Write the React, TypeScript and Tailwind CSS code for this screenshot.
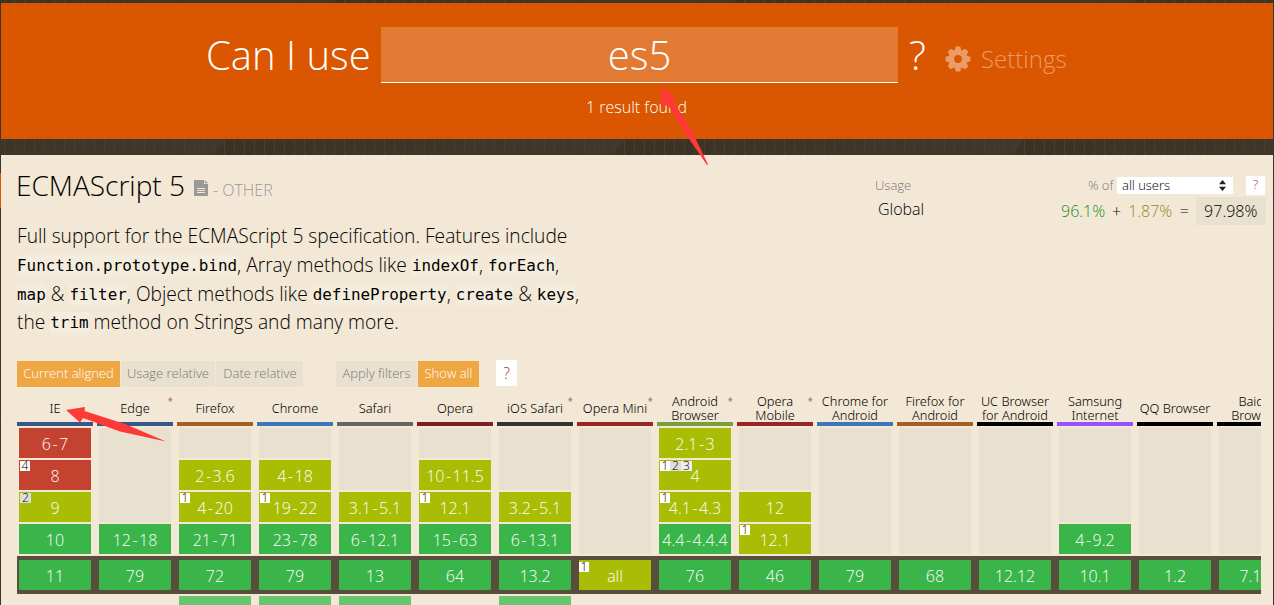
import React from "react";

type Cell = { v: string; s: "y" | "a" | "n"; notes?: string[] };
type Browser = {
  name: string[];
  bar: string;
  star?: boolean;
  past: Cell[];
  now: Cell;
  next?: boolean;
};

const y = (v: string): Cell => ({ v, s: "y" });
const a = (v: string, ...notes: string[]): Cell => ({ v, s: "a", notes });
const n = (v: string, ...notes: string[]): Cell => ({ v, s: "n", notes });

const tone = { y: "bg-[#39b54a]", a: "bg-[#a8bd04]", n: "bg-[#c44230]" };

const browsers: Browser[] = [
  { name: ["IE"], bar: "bg-[#375787]", past: [n("6-7"), n("8", "4"), a("9", "2"), y("10")], now: y("11") },
  { name: ["Edge"], bar: "bg-[#375787]", star: true, past: [y("12-18")], now: y("79") },
  { name: ["Firefox"], bar: "bg-[#a55f24]", past: [a("2-3.6"), a("4-20", "1"), y("21-71")], now: y("72"), next: true },
  { name: ["Chrome"], bar: "bg-[#3e76bb]", past: [a("4-18"), a("19-22", "1"), y("23-78")], now: y("79"), next: true },
  { name: ["Safari"], bar: "bg-[#666666]", past: [a("3.1-5.1"), y("6-12.1")], now: y("13"), next: true },
  { name: ["Opera"], bar: "bg-[#801f22]", past: [a("10-11.5"), a("12.1", "1"), y("15-63")], now: y("64") },
  { name: ["iOS Safari"], bar: "bg-[#333333]", star: true, past: [a("3.2-5.1"), y("6-13.1")], now: y("13.2"), next: true },
  { name: ["Opera Mini"], bar: "bg-[#972428]", star: true, past: [], now: a("all", "1") },
  { name: ["Android", "Browser"], bar: "bg-[#7a9f3c]", star: true, past: [a("2.1-3"), a("4", "1", "2", "3"), a("4.1-4.3", "1"), y("4.4-4.4.4")], now: y("76") },
  { name: ["Opera", "Mobile"], bar: "bg-[#972428]", star: true, past: [a("12"), a("12.1", "1")], now: y("46") },
  { name: ["Chrome for", "Android"], bar: "bg-[#3e76bb]", past: [], now: y("79") },
  { name: ["Firefox for", "Android"], bar: "bg-[#a55f24]", past: [], now: y("68") },
  { name: ["UC Browser", "for Android"], bar: "bg-black", past: [], now: y("12.12") },
  { name: ["Samsung", "Internet"], bar: "bg-[#9751ff]", past: [y("4-9.2")], now: y("10.1") },
  { name: ["QQ Browser"], bar: "bg-black", past: [], now: y("1.2") },
  { name: ["Baidu", "Browser"], bar: "bg-black", past: [], now: y("7.12") },
];

const emptyHeight = ["h-0", "h-[30px]", "h-[62px]", "h-[94px]", "h-[126px]"];
const noteTone: Record<string, string> = {
  "1": "w-[10px] bg-white",
  "2": "w-[11px] bg-[#dddddd]",
  "3": "w-[11px] bg-[#eeeeee]",
  "4": "w-[10px] bg-white",
};

function Version({ cell, current }: { cell: Cell; current?: boolean }) {
  return (
    <div className={`relative h-[30px] w-[72px] shrink-0 whitespace-nowrap pt-px text-center text-[16px] leading-[31px] text-white ${tone[cell.s]}`}>
      {cell.v.split("-").map((part, i) => (
        <React.Fragment key={i}>
          {i > 0 && <span className="mx-[1.5px]">-</span>}
          {part}
        </React.Fragment>
      ))}
      {cell.notes && cell.notes.length > 0 && (
        <span className={`absolute flex ${current ? "left-0 top-[2px]" : "left-px top-px"}`}>
          {cell.notes.map((k) => (
            <span key={k} className={`h-[10px] text-center text-[12px] leading-[9px] text-black ${noteTone[k]}`}>
              {k}
            </span>
          ))}
        </span>
      )}
    </div>
  );
}

function Column({ b }: { b: Browser }) {
  const missing = 4 - b.past.length;
  return (
    <div className="flex w-[80px] shrink-0 flex-col">
      <div className="relative flex h-[28px] w-[76px] flex-col justify-center text-center font-['Noto_Sans'] text-[12.8px] leading-[14px] text-black">
        {b.name.map((l) => (
          <span key={l} className="whitespace-nowrap">{l}</span>
        ))}
        {b.star && <span className="absolute right-0 top-[1px] text-[10px] leading-[12px] text-[#8a3a28]">*</span>}
      </div>
      <div className={`h-1 w-[76px] ${b.bar}`} />
      <div className="flex h-[130px] flex-col gap-[2px] pl-[2px] pt-[2px]">
        {missing > 0 && <div className={`w-[72px] shrink-0 bg-[#e9e1cf] ${emptyHeight[missing]}`} />}
        {b.past.map((c) => (
          <Version key={c.v} cell={c} />
        ))}
      </div>
      <div className="h-[38px] bg-[#594d3b] pl-[2px] pt-1">
        <Version cell={b.now} current />
      </div>
      <div className="pl-[2px] pt-[2px]">{b.next && <div className="h-[30px] w-[72px] bg-[#69c46e]" />}</div>
    </div>
  );
}

function Code({ children }: { children: string }) {
  return (
    <code className="bg-[#f4ecdc] py-[1px] align-[1px] font-['DejaVu_Sans_Mono',monospace] text-[15.9px] leading-[18px] text-black">{children}</code>
  );
}

function Gear() {
  return (
    <svg width="26" height="26" viewBox="-13 -13 26 26" fill="#eb9c66">
      {[0, 45, 90, 135, 180, 225, 270, 315].map((d) => (
        <path key={d} d="M-3.4 -8 L-2.2 -12.4 H2.2 L3.4 -8 Z" transform={`rotate(${d})`} />
      ))}
      <path fillRule="evenodd" d="M0 -9.4A9.4 9.4 0 1 1 0 9.4A9.4 9.4 0 1 1 0 -9.4ZM0 -3.9A3.9 3.9 0 1 0 0 3.9A3.9 3.9 0 1 0 0 -3.9Z" />
    </svg>
  );
}

const tab = "flex h-[26px] items-center justify-center whitespace-nowrap text-[13px]";

export default function App() {
  return (
    <div className="relative h-[605px] w-[1274px] overflow-hidden bg-[#3d3426] bg-[repeating-linear-gradient(90deg,transparent_0_4px,#463e30_4px_5px,transparent_5px_10px),repeating-linear-gradient(128deg,#3b3224_-51px,#40382a_263.6px)] px-px pt-[3px] font-['Open_Sans',sans-serif] font-light text-black">
      <div className="absolute left-0 top-[173px] h-[35px] w-px bg-[#db5600]" />
      <header className="h-[136px] bg-[#db5600] pt-6 text-white">
        <div className="flex h-14 pl-[205px]">
          <span className="w-[175px] whitespace-nowrap text-[40px] leading-[56px]">Can I use</span>
          <div className="h-14 w-[517px] border-b border-white bg-[#e37a34] text-center text-[40px] leading-[56px]">es5</div>
          <span className="ml-[11px] w-[36px] text-[40px] leading-[56px]">?</span>
          <span className="mt-[19px]"><Gear /></span>
          <span className="ml-[10px] text-[24px] leading-[64px] text-[#eb9c66]">Settings</span>
        </div>
        <p className="pr-px pt-[13px] text-center text-[16px] leading-[22px] text-white">1 result found</p>
      </header>

      <main className="mt-4 h-[450px] bg-[#f3e8d6] pl-4">
        <div className="flex h-[205px] justify-between">
          <div className="w-[580px]">
            <h1 className="-ml-px flex items-baseline pt-[10px] leading-[40px]">
              <span className="text-[28px]">ECMAScript 5</span>
              <svg className="ml-[9px] self-center" width="14" height="16" viewBox="0 0 14 16">
                <path fill="#999" d="M0 0H10V4H14V16H0Z" />
                <path fill="#999" d="M10.8 0L14 3.2H10.8Z" />
                <path stroke="#f3e8d6" d="M3 8.5H11M3 10.5H11M3 12.5H11" />
              </svg>
              <span className="ml-[5px] text-[16px] text-[#999]">- OTHER</span>
            </h1>
            <p className="mt-[12px] whitespace-nowrap text-[19.2px] leading-[28.8px]">
              Full support for the ECMAScript 5 specification. Features include
              <br />
              <Code>Function.prototype.bind</Code>, Array methods like <Code>indexOf</Code>, <Code>forEach</Code>,
              <br />
              <Code>map</Code> &amp; <Code>filter</Code>, Object methods like <Code>defineProperty</Code>, <Code>create</Code> &amp; <Code>keys</Code>,
              <br />
              the <Code>trim</Code> method on Strings and many more.
            </p>
          </div>
          <div className="w-[398px] pt-5">
            <div className="flex h-[20px] items-center text-[13px] text-[#777]">
              <span className="w-[213px] pt-px">Usage</span>
              <span className="w-[29px] whitespace-nowrap pt-px">% of</span>
              <span className="flex h-[17px] w-[116px] items-center justify-between bg-white pl-[5px] pr-[7px] text-black">
                <span className="pt-px">all users</span>
                <svg width="7" height="11" viewBox="0 0 7 11" fill="#222"><path d="M3.5 0L7 4.3H0ZM3.5 11L0 6.7H7Z" /></svg>
              </span>
              <span className="ml-[13px] flex h-[19px] w-[19px] items-center justify-center bg-white text-[#a33a20]">?</span>
            </div>
            <div className="flex h-[32px] items-center text-[16px]">
              <span className="w-[186px] pb-1 pl-[3px]">Global</span>
              <span className="text-[#148f26]">96.1%</span>
              <span className="w-[23px] text-center">+</span>
              <span className="text-[#8f8a12]">1.87%</span>
              <span className="w-[24px] text-center">=</span>
              <span className="flex h-7 w-[70px] items-center justify-center bg-[#e9e1cf] pr-px">97.98%</span>
            </div>
          </div>
        </div>

        <div className="flex h-[34px] pt-px">
          <span className={`${tab} w-[103px] bg-[#eea743] text-white`}>Current aligned</span>
          <span className={`${tab} ml-px w-[94px] bg-[#e9e1cf] text-[#777]`}>Usage relative</span>
          <span className={`${tab} ml-px w-[87px] bg-[#e9e1cf] pl-px text-[#777]`}>Date relative</span>
          <span className={`${tab} ml-[33px] w-[81px] bg-[#e9e1cf] text-[#777]`}>Apply filters</span>
          <span className={`${tab} ml-px w-[61px] bg-[#eea743] text-white`}>Show all</span>
          <span className="-mt-px ml-[17px] flex h-[26px] w-[21px] items-center justify-center bg-white text-[16px] text-[#a33a20]">?</span>
        </div>

        <div className="flex w-[1244px] overflow-hidden">
          {browsers.map((b) => (
            <Column key={b.name.join(" ")} b={b} />
          ))}
        </div>
      </main>

      <svg className="pointer-events-none absolute left-0 top-0" width="1274" height="605" fill="#ff3838">
        <path d="M661.5 87L676 96.7L672.500 99.500L692 131L708 164.500L707 165L685 133L668 105L661 107Z" />
        <path d="M66 410L85 407L84.500 411L125 424L166 441.500L120 431.500L83 418L80 422.500Z" />
      </svg>
    </div>
  );
}
